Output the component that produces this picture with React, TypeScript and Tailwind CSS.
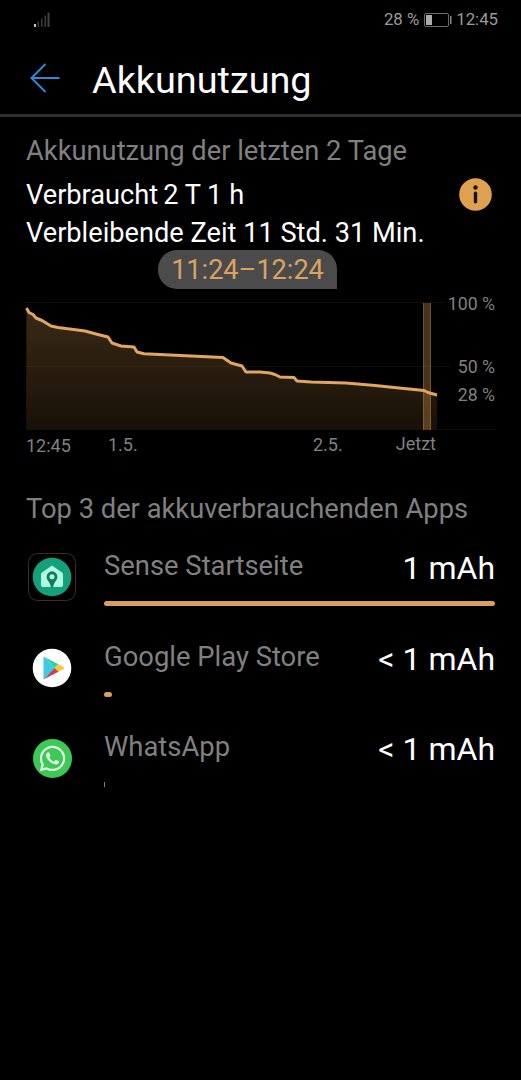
import type { ReactNode } from "react";
import { FaWhatsapp } from "react-icons/fa";

const LEVELS = [
  [0.5, 6], [3, 10.5], [7, 12.5], [10, 16], [16, 18.5], [25, 24], [32, 25.5], [59, 29],
  [70, 32], [82, 35], [86, 41], [95, 44], [108, 45], [111, 50], [118, 51.7], [197, 55.5],
  [205, 61], [216, 64], [220, 70], [234, 70], [244, 71], [249, 72.5], [254, 75],
  [268, 75.5], [271, 79], [285, 80], [320, 81], [349, 83.5], [378, 86.5], [398, 88.5],
  [402, 90.5], [411, 93],
];

const line = LEVELS.map(([x, y]) => `${x},${y}`).join(" ");

function StatusBar() {
  return (
    <div className="flex h-10 items-center pr-[23px] pl-[34px] text-[16.8px] text-[#9b9b9b]">
      <svg width="16" height="16" viewBox="0 0 16 16">
        <rect x="0" y="12" width="2" height="3" fill="#c8c8c8" />
        <rect x="3.5" y="9.5" width="1.5" height="5.5" fill="#3c3c3c" />
        <rect x="7" y="6.5" width="1.5" height="8.5" fill="#3c3c3c" />
        <rect x="10.5" y="3.5" width="1.5" height="11.5" fill="#3c3c3c" />
        <rect x="13.5" y="0.5" width="2" height="14.5" fill="#444444" />
      </svg>
      <span className="ml-auto">28 %</span>
      <svg width="28" height="14" viewBox="0 0 28 14" className="mr-1 ml-[5px]">
        <rect x="0.5" y="0.5" width="24" height="13" rx="1.5" fill="none" stroke="#6c6c6c" />
        <rect x="2" y="2" width="6" height="10" fill="#ababab" />
        <rect x="26" y="3" width="1.5" height="8" fill="#8a8a8a" />
      </svg>
      <span>12:45</span>
    </div>
  );
}

function Header() {
  return (
    <header className="flex h-[77px] items-center border-b-[3px] border-[#2e2e2e] pt-[2px] pl-[30px]">
      <svg width="30" height="30" viewBox="0 0 30 30" fill="none" stroke="#3189d3" strokeWidth="2">
        <path d="M29.5 15H1.5M15.5 1L1.5 15L15.5 29" />
      </svg>
      <h1 className="mt-1 ml-8 text-[37.8px] leading-10 text-white">Akkunutzung</h1>
    </header>
  );
}

function BatteryChart() {
  return (
    <div className="mt-[13px]">
      <div className="flex h-32">
        <svg width="411" height="128" viewBox="0 0 411 128" className="shrink-0 overflow-visible">
          <defs>
            <linearGradient id="level" x1="0" y1="0" x2="0" y2="1">
              <stop offset="0" stopColor="#3a2916" />
              <stop offset="1" stopColor="#181108" />
            </linearGradient>
          </defs>
          <path d="M-1 0.5H419M411 64.5H425M0 64.5H411M0 127.5H469" stroke="#130e09" />
          <polygon points={`0,128 ${line} 411,128`} fill="url(#level)" />
          <path d="M0 64.5H216" stroke="#362814" />
          <rect x="397" y="1" width="8" height="127" fill="#d99a4e" fillOpacity="0.33" />
          <path d="M397.5 1V128M404.5 1V128" stroke="#d99a4e" strokeOpacity="0.3" />
          <polyline points={line} fill="none" stroke="#e0a662" strokeWidth="3" strokeLinejoin="round" />
        </svg>
        <div className="flex flex-1 flex-col text-right text-[17.7px] leading-5 whitespace-nowrap text-[#808080]">
          <span className="-mt-2">100 %</span>
          <span className="mt-[43px]">50 %</span>
          <span className="mt-2">28 %</span>
        </div>
      </div>
      <div className="mt-1.5 flex text-[18px] leading-5 text-[#808080]">
        <span className="w-[82px]">12:45</span>
        <span className="-mt-px w-[205px]">1.5.</span>
        <span className="-mt-px">2.5.</span>
        <span className="-mt-0.5 mr-[59px] ml-auto">Jetzt</span>
      </div>
    </div>
  );
}

function SenseIcon() {
  return (
    <svg width="48" height="48" viewBox="0 0 48 48">
      <rect x="0.5" y="0.5" width="47" height="47" rx="9" fill="#000" stroke="#3b2c27" />
      <circle cx="24" cy="24" r="19.3" fill="#14a07a" />
      <path d="M24 12.5L34 19.5Q35 20.3 35 21.5V32Q35 34 33 34H15Q13 34 13 32V21.5Q13 20.3 14 19.5Z" fill="#aefbe0" />
      <path d="M24 18.3A5.4 5.4 0 0 0 18.6 23.7C18.6 27.5 22 28.5 23 34.5H25C26 28.5 29.4 27.5 29.4 23.7A5.4 5.4 0 0 0 24 18.3Z" fill="#117b60" />
      <circle cx="24" cy="23.7" r="2.5" fill="#aefbe0" />
    </svg>
  );
}

function PlayIcon() {
  return (
    <svg width="48" height="48" viewBox="0 0 48 48">
      <circle cx="24" cy="24" r="19.3" fill="#fff" />
      <path d="M15.5 12.5V35.5L26.5 24Z" fill="#3fcbe8" />
      <path d="M15.5 12.5L30.5 20.3L26.5 24Z" fill="#2fd39b" />
      <path d="M30.5 20.3L36 23.2Q37 24 36 24.8L30.5 27.7L26.5 24Z" fill="#fbc62f" />
      <path d="M15.5 35.5L26.5 24L30.5 27.7Z" fill="#c4405c" />
    </svg>
  );
}

function WhatsAppIcon() {
  return (
    <div className="m-[4.5px] flex size-[39px] items-center justify-center rounded-full bg-[#3bcb54]">
      <FaWhatsapp className="size-[29px] text-[#effff0]" />
    </div>
  );
}

type AppRowProps = {
  icon: ReactNode;
  name: string;
  usage: string;
  bar: string;
};

function AppRow({ icon, name, usage, bar }: AppRowProps) {
  return (
    <li className="flex h-[90.5px]">
      <div className="mt-2 ml-0.5 size-12 shrink-0">{icon}</div>
      <div className="ml-7 flex-1">
        <div className="flex h-14 justify-between">
          <span className="mt-[5px] text-[27.4px] leading-8 text-[#808080]">{name}</span>
          <span className="mt-[7px] text-[32px] leading-8 text-white">{usage}</span>
        </div>
        <div className={bar} />
      </div>
    </li>
  );
}

export default function App() {
  return (
    <div className="h-[1080px] w-[521px] overflow-hidden bg-black font-['Roboto',sans-serif]">
      <StatusBar />
      <Header />
      <main className="px-[26px] pt-[18px]">
        <h2 className="text-[27.3px] leading-8 text-[#808080]">Akkunutzung der letzten 2 Tage</h2>
        <div className="mt-[9px] flex h-[74px] justify-between text-[27.2px] leading-[38px] text-white">
          <div className="whitespace-nowrap">
            <p>
              Verbraucht<span className="ml-[5px]">2 T 1 h</span>
            </p>
            <p>Verbleibende Zeit 11 Std. 31 Min.</p>
          </div>
          <svg width="33" height="33" viewBox="0 0 33 33" className="mt-0.5 mr-[3px] shrink-0">
            <circle cx="16.5" cy="16.5" r="16.3" fill="#dfa04f" />
            <circle cx="16.5" cy="9.5" r="2.2" fill="#1a1005" />
            <rect x="14.8" y="13.5" width="3.4" height="12" rx="1.7" fill="#1a1005" />
          </svg>
        </div>
        <div className="ml-[132px] h-[39px] w-[179px] rounded-[19px] rounded-br-none bg-[#4b4b4b] text-center text-[27.1px] leading-[41px] text-[#dba35f]">
          11:24–12:24
        </div>
        <BatteryChart />
        <h2 className="mt-[37px] text-[27.3px] leading-8 text-[#808080]">Top 3 der akkuverbrauchenden Apps</h2>
        <ul className="mt-5">
          <AppRow
            icon={<SenseIcon />}
            name="Sense Startseite"
            usage="1 mAh"
            bar="h-[5px] w-full rounded-full bg-[#d99f5c]"
          />
          <AppRow
            icon={<PlayIcon />}
            name="Google Play Store"
            usage="< 1 mAh"
            bar="h-[5px] w-2 rounded-full bg-[#d99f5c]"
          />
          <AppRow
            icon={<WhatsAppIcon />}
            name="WhatsApp"
            usage="< 1 mAh"
            bar="h-[5px] w-px bg-[#8a8070]"
          />
        </ul>
      </main>
    </div>
  );
}
